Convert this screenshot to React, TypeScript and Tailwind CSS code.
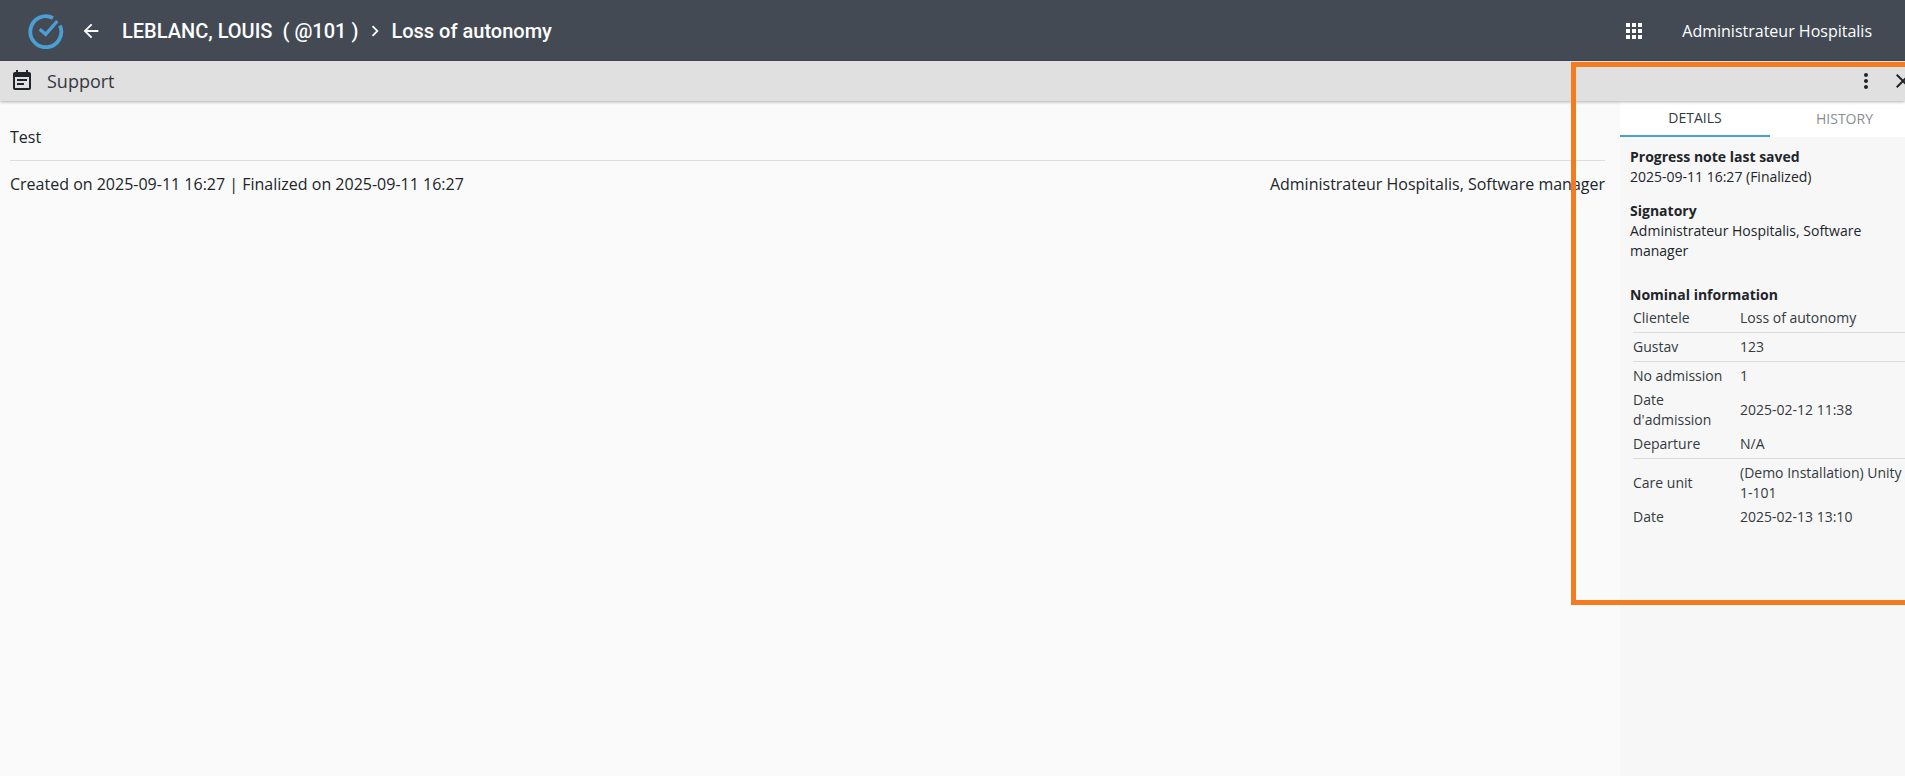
const openSans = "font-['Open_Sans',sans-serif]"

function Logo() {
  return (
    <svg width="36" height="36" viewBox="0 0 36 36" fill="none" className="text-[#4a9fd4]">
      <path d="M25 5A15.5 15.5 0 1 0 32 12.5" stroke="currentColor" strokeWidth="3.8" />
      <path d="M11.7 16.3l6 5L29.3 8" stroke="currentColor" strokeWidth="3.4" />
    </svg>
  )
}

function Icon({ d, size = 24, className }: { d: string; size?: number; className?: string }) {
  return (
    <svg width={size} height={size} viewBox="0 0 24 24" fill="currentColor" className={className}>
      <path d={d} />
    </svg>
  )
}

function Row({ label, value, line }: { label: string; value: string; line?: boolean }) {
  return (
    <div className={`flex items-center ml-[3px] py-[2px] ${line ? "border-b border-[#dcdcdc] pb-[4px] mb-[2px]" : ""}`}>
      <div className="w-[107px] shrink-0 pr-2 text-[#333a40]">{label}</div>
      <div className="w-[165px] shrink-0 text-[#333a40]">{value}</div>
    </div>
  )
}

export default function App() {
  return (
    <div className={`relative h-[776px] w-[1905px] overflow-hidden bg-[#fafafa] text-[16px] text-[#212529] ${openSans}`}>
      <header className="flex h-[61px] items-center bg-[#434a54] text-white">
        <div className="ml-[28px]"><Logo /></div>
        <Icon className="ml-[16px]" size={22} d="M20 11H7.83l5.59-5.59L12 4l-8 8 8 8 1.41-1.41L7.83 13H20v-2z" />
        <div className="ml-[20px] flex items-center font-['Roboto',sans-serif] text-[20px] font-medium">
          <span>LEBLANC, LOUIS</span>
          <span className="ml-[10px]">( @101 )</span>
          <Icon className="ml-[6px] mr-[5px]" size={22} d="M8.59 16.59 13.17 12 8.59 7.41 10 6l6 6-6 6z" />
          <span>Loss of autonomy</span>
        </div>
        <div className="ml-auto flex items-center">
          <svg width="16" height="16" viewBox="0 0 16 16" fill="currentColor">
            <rect x="0" y="0" width="4" height="4" /><rect x="6" y="0" width="4" height="4" /><rect x="12" y="0" width="4" height="4" />
            <rect x="0" y="6" width="4" height="4" /><rect x="6" y="6" width="4" height="4" /><rect x="12" y="6" width="4" height="4" />
            <rect x="0" y="12" width="4" height="4" /><rect x="6" y="12" width="4" height="4" /><rect x="12" y="12" width="4" height="4" />
          </svg>
          <span className="ml-[40px] mr-[33px]">Administrateur Hospitalis</span>
        </div>
      </header>

      <div className="relative z-10 flex h-[40px] items-center bg-[#e0e0e0] shadow-[0_1px_3px_rgba(0,0,0,0.3)]">
        <Icon className="ml-[10px]" size={24} d="M17 10H7v2h10v-2zm2-7h-1V1h-2v2H8V1H6v2H5c-1.11 0-1.99.9-1.99 2L3 19c0 1.1.89 2 2 2h14c1.1 0 2-.9 2-2V5c0-1.1-.9-2-2-2zm0 16H5V8h14v11zm-5-5H7v2h7v-2z" />
        <span className="ml-[13px] text-[18px] leading-[24px] text-[#33383d]">Support</span>
        <div className="ml-auto flex items-center">
          <Icon className="mr-[13px]" size={24} d="M12 8c1.1 0 2-.9 2-2s-.9-2-2-2-2 .9-2 2 .9 2 2 2zm0 2c-1.1 0-2 .9-2 2s.9 2 2 2 2-.9 2-2-.9-2-2-2zm0 6c-1.1 0-2 .9-2 2s.9 2 2 2 2-.9 2-2-.9-2-2-2z" />
          <Icon className="-mr-[10px]" size={24} d="M19 6.41 17.59 5 12 10.59 6.41 5 5 6.41 10.59 12 5 17.59 6.41 19 12 13.41 17.59 19 19 17.59 13.41 12z" />
        </div>
      </div>

      <div className="flex h-[675px]">
        <main className="min-w-0 flex-1 pl-[10px] pr-[15px]">
          <div className="border-b border-[#dedede] pb-[13px] pt-[26px] leading-[20px]">Test</div>
          <div className="flex justify-between pt-[13px] leading-[20px]">
            <span>Created on 2025-09-11 16:27 | Finalized on 2025-09-11 16:27</span>
            <span>Administrateur Hospitalis, Software manager</span>
          </div>
        </main>

        <aside className="w-[285px] shrink-0 bg-[#f7f7f7] text-[14px] leading-[20px]">
          <div className="flex h-[36px] bg-white">
            <div className="flex w-[150px] items-center justify-center border-b-2 border-[#4a9fd4] text-[#33383d]">DETAILS</div>
            <div className="flex w-[135px] items-center justify-center pl-[14px] text-[#8a8d93]">HISTORY</div>
          </div>
          <div className="pl-[10px] pt-[10px]">
            <div className="font-bold">Progress note last saved</div>
            <div>2025-09-11 16:27 (Finalized)</div>
            <div className="mt-[14px] font-bold">Signatory</div>
            <div className="w-[240px]">Administrateur Hospitalis, Software manager</div>
            <div className="mb-[1px] mt-[24px] font-bold">Nominal information</div>
            <Row label="Clientele" value="Loss of autonomy" line />
            <Row label="Gustav" value="123" line />
            <Row label="No admission" value="1" />
            <Row label="Date d'admission" value="2025-02-12 11:38" />
            <Row label="Departure" value="N/A" line />
            <Row label="Care unit" value="(Demo Installation) Unity 1-101" />
            <Row label="Date" value="2025-02-13 13:10" />
          </div>
        </aside>
      </div>

      <div className="absolute left-[1571px] top-[62px] z-20 h-[543px] w-[345px] border-[5px] border-[#f47b20]" />
    </div>
  )
}
